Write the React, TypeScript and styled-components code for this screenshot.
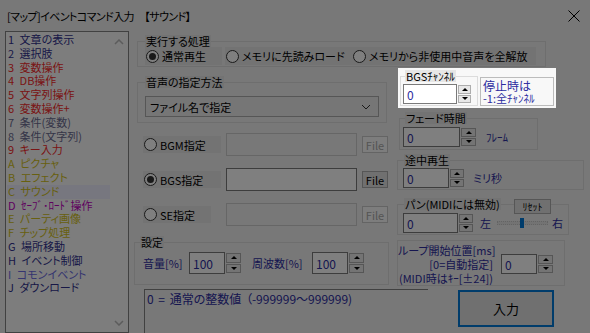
import React from "react";
import styled, { createGlobalStyle } from "styled-components";

const GlobalStyle = createGlobalStyle`
  html, body {
    margin: 0;
    padding: 0;
    background: #787878;
  }
  * {
    box-sizing: border-box;
  }
`;

const FONT = `"Noto Sans CJK JP", "Noto Sans", sans-serif`;
const NAVY = "#2c2ca0";

const BLUE = "#30308e";
const RED = "#f42a2a";
const GREY = "#6a6a90";
const OLIVE = "#d0c020";
const PURPLE = "#c000c0";
const LIGHT_BLUE = "#6a6ae0";

const COMMANDS: { label: string; color: string; selected?: boolean }[] = [
  { label: "1 文章の表示", color: BLUE },
  { label: "2 選択肢", color: BLUE },
  { label: "3 変数操作", color: RED },
  { label: "4 DB操作", color: RED },
  { label: "5 文字列操作", color: RED },
  { label: "6 変数操作+", color: RED },
  { label: "7 条件(変数)", color: GREY },
  { label: "8 条件(文字列)", color: GREY },
  { label: "9 キー入力", color: RED },
  { label: "A ピクチャ", color: OLIVE },
  { label: "B エフェクト", color: OLIVE },
  { label: "C サウンド", color: OLIVE, selected: true },
  { label: "D ｾｰﾌﾞ･ﾛｰﾄﾞ操作", color: PURPLE },
  { label: "E パーティ画像", color: OLIVE },
  { label: "F チップ処理", color: OLIVE },
  { label: "G 場所移動", color: BLUE },
  { label: "H イベント制御", color: BLUE },
  { label: "I コモンイベント", color: LIGHT_BLUE },
  { label: "J ダウンロード", color: BLUE },
];

const Window = styled.div`
  position: relative;
  width: 590px;
  height: 333px;
  overflow: hidden;
  background: #f0f0f0;
  font-family: ${FONT};
  font-size: 11px;
  font-feature-settings: "palt";
  color: #000;
`;

const TitleBar = styled.div`
  height: 31px;
  display: flex;
  align-items: center;
  justify-content: space-between;
  padding: 0 10px 0 7px;
`;

const TitleText = styled.div`
  font-size: 11px;
  line-height: 14px;
  letter-spacing: -0.6px;
  white-space: pre;
`;

const Body = styled.div`
  display: flex;
  gap: 8px;
  padding-left: 5px;
`;

/* command list */
const CommandList = styled.div`
  width: 124px;
  height: 302px;
  border: 1px solid #828282;
  background: #fbfbfb;
  display: flex;
`;

const Items = styled.div`
  width: 104px;
  padding: 1px 0 0 1px;
`;

const CommandItem = styled.div<{ $color: string; $selected?: boolean }>`
  height: 13.8px;
  line-height: 13.8px;
  padding-left: 1px;
  white-space: nowrap;
  word-spacing: 3px;
  color: ${(p) => p.$color};
  background: ${(p) => (p.$selected ? "#eeeeff" : "transparent")};
`;

const ScrollTrack = styled.div`
  flex: 1;
  display: flex;
  flex-direction: column;
  justify-content: space-between;
  align-items: center;
  padding: 7px 0 6px;
`;

/* generic win32 parts */
const Group = styled.fieldset`
  margin: 0;
  min-width: 0;
  border: 1px solid #dcdcdc;
  padding: 0;
`;

const Legend = styled.legend<{ $ml?: number }>`
  padding: 0 1px;
  margin-left: ${(p) => p.$ml ?? 0}px;
  height: 12px;
  line-height: 12px;
  background: #e6e6e6;
  white-space: nowrap;
`;

const RadioLabel = styled.div<{ $w: number; $h?: number; $ml?: number }>`
  display: flex;
  align-items: center;
  gap: 3px;
  width: ${(p) => p.$w}px;
  height: ${(p) => p.$h ?? 18}px;
  margin-left: ${(p) => p.$ml ?? 0}px;
  padding-left: 1px;
  background: #e6e6e6;
  white-space: nowrap;
`;

const RadioCircle = styled.span<{ $checked?: boolean }>`
  width: 13px;
  height: 13px;
  flex: none;
  border-radius: 50%;
  border: 1px solid #333;
  background: #fff;
  display: flex;
  align-items: center;
  justify-content: center;

  &::after {
    content: "";
    width: 7px;
    height: 7px;
    border-radius: 50%;
    background: ${(p) => (p.$checked ? "#333" : "transparent")};
  }
`;

const PushButton = styled.div<{ $w: number; $h: number; $disabled?: boolean }>`
  width: ${(p) => p.$w}px;
  height: ${(p) => p.$h}px;
  border: 1px solid ${(p) => (p.$disabled ? "#c8c8c8" : "#adadad")};
  background: ${(p) => (p.$disabled ? "#fafafa" : "#e1e1e1")};
  color: ${(p) => (p.$disabled ? "#a8a8a8" : "#000")};
  font-size: 11px;
  display: flex;
  align-items: center;
  justify-content: center;
  flex: none;
`;

/* spin control */
const SpinBox = styled.div<{ $h: number; $ml?: number }>`
  display: flex;
  height: ${(p) => p.$h}px;
  margin-left: ${(p) => p.$ml ?? 0}px;
  flex: none;
`;

const SpinField = styled.div<{ $w: number }>`
  width: ${(p) => p.$w}px;
  border: 1px solid #7a7a7a;
  background: #fff;
  color: ${NAVY};
  font-size: 12px;
  padding-left: 3px;
  display: flex;
  align-items: center;
`;

const SpinButtons = styled.div<{ $w: number }>`
  width: ${(p) => p.$w}px;
  display: flex;
  flex-direction: column;
  gap: 1px;
  padding: 1px 0 1px 1px;
`;

const SpinArrow = styled.div<{ $down?: boolean }>`
  flex: 1;
  border: 1px solid #adadad;
  background: #e8e8e8;
  display: flex;
  align-items: center;
  justify-content: center;

  &::after {
    content: "";
    border-left: 3px solid transparent;
    border-right: 3px solid transparent;
    ${(p) =>
      p.$down ? "border-top: 3px solid #000;" : "border-bottom: 3px solid #000;"}
  }
`;

function Spin({
  value,
  w,
  bw,
  h,
  ml,
}: {
  value: string;
  w: number;
  bw: number;
  h: number;
  ml?: number;
}) {
  return (
    <SpinBox $h={h} $ml={ml}>
      <SpinField $w={w}>{value}</SpinField>
      <SpinButtons $w={bw}>
        <SpinArrow />
        <SpinArrow $down />
      </SpinButtons>
    </SpinBox>
  );
}

const Unit = styled.span<{ $ml: number }>`
  margin-left: ${(p) => p.$ml}px;
  color: ${NAVY};
  white-space: nowrap;
`;

/* main area */
const Main = styled.div`
  width: 447px;
  display: flex;
  flex-direction: column;
`;

const ProcessGroup = styled(Group)`
  margin-top: 4px;
  width: 409px;
  padding: 0 7px 1px;
`;

const RadioRow = styled.div`
  display: flex;
`;

const Columns = styled.div`
  display: flex;
  gap: 8px;
`;

const LeftColumn = styled.div`
  width: 252px;
  display: flex;
  flex-direction: column;
`;

const SoundGroup = styled(Group)`
  margin-top: 9px;
  width: 250px;
  padding: 0 7px 5px;
`;

const Select = styled.div`
  margin-top: 8px;
  height: 21px;
  border: 1px solid #adadad;
  background: #ececec;
  display: flex;
  align-items: center;
  justify-content: space-between;
  padding: 0 7px 0 4px;
`;

const FileRow = styled.div<{ $mt: number }>`
  display: grid;
  grid-template-columns: 78px 131px 26px;
  align-items: center;
  gap: 5px;
  margin-top: ${(p) => p.$mt}px;
  padding-left: 6px;
`;

const PathInput = styled.div<{ $disabled?: boolean }>`
  height: 23px;
  border: 1px solid ${(p) => (p.$disabled ? "#cccccc" : "#7a7a7a")};
  background: ${(p) => (p.$disabled ? "#f0f0f0" : "#fff")};
`;

const SettingsGroup = styled(Group)`
  margin: 10px 0 0 -3px;
  width: 255px;
  padding: 0 8px 10px;
`;

const SettingsRow = styled.div`
  display: flex;
  align-items: center;
  margin-top: 4px;
`;

const SettingLabel = styled.span<{ $w: number; $ml?: number }>`
  width: ${(p) => p.$w}px;
  margin-left: ${(p) => p.$ml ?? 0}px;
  color: ${NAVY};
  white-space: nowrap;
`;

const RightColumn = styled.div`
  width: 187px;
  display: flex;
  flex-direction: column;
`;

const Highlight = styled.div`
  position: relative;
  z-index: 2;
  margin: 1px 0 0 1px;
  width: 158px;
  height: 40px;
  padding: 2px;
  display: flex;
  align-items: flex-start;
  background: #f8f8f8;
`;

const ChannelGroup = styled(Group)`
  width: 78px;
  padding: 0 2px 1px;
`;

const NoteBox = styled.div`
  margin: 7px 0 0 2px;
  width: 74px;
  height: 29px;
  border: 1px solid #bcbcbc;
  padding: 1px 0 0 2px;
  color: ${NAVY};
  font-size: 12px;
  line-height: 13px;
  white-space: nowrap;
  overflow: hidden;
`;

const SmallLine = styled.div`
  font-size: 11px;
`;

const SpinRow = styled.div<{ $mt: number }>`
  display: flex;
  align-items: center;
  margin-top: ${(p) => p.$mt}px;
`;

const FadeGroup = styled(Group)`
  margin: 4px 0 0 2px;
  width: 139px;
  padding: 0 3px 2px;
`;

const MidwayGroup = styled(Group)`
  margin-top: 4px;
  width: 187px;
  padding: 0 5px 1px;
`;

const PanWrap = styled.div`
  position: relative;
  margin-top: 8px;
`;

const PanGroup = styled(Group)`
  width: 172px;
  padding: 0 5px 1px;
`;

const ResetButton = styled(PushButton)`
  position: absolute;
  top: 1px;
  left: 117px;
  font-size: 10px;
`;

const Slider = styled.div`
  position: relative;
  width: 51px;
  height: 12px;
  margin-left: 6px;
  display: flex;
  align-items: center;
`;

const SliderTrack = styled.div`
  width: 100%;
  height: 4px;
  border: 1px dotted #c8c8c8;
  background: #e7e7e7;
`;

const SliderThumb = styled.div`
  position: absolute;
  left: 23px;
  top: 1px;
  width: 4px;
  height: 10px;
  background: #0078d7;
`;

const LoopGroup = styled(Group)`
  margin-top: 5px;
  width: 168px;
  padding: 2px 0 0;
  display: flex;
  align-items: center;
`;

const LoopLabels = styled.div`
  width: 95px;
  text-align: right;
  line-height: 14px;
  color: ${NAVY};
  white-space: nowrap;
`;

const BottomRow = styled.div`
  display: flex;
  align-items: flex-start;
  margin-top: 3px;
`;

const InfoBox = styled.div`
  margin-left: 7px;
  width: 284px;
  height: 50px;
  border-top: 1px solid #828282;
  border-left: 1px solid #828282;
  padding: 2px 2px;
  font-size: 12px;
  line-height: 14px;
  word-spacing: 2px;
  color: ${NAVY};
  white-space: nowrap;
`;

const EnterButton = styled.div`
  margin: 1px 0 0 30px;
  width: 96px;
  height: 37px;
  border: 2px solid #0078d7;
  background: #e1e1e1;
  font-size: 13px;
  display: flex;
  align-items: center;
  justify-content: center;
`;

const Dim = styled.div`
  position: absolute;
  inset: 0;
  z-index: 1;
  background: rgba(0, 0, 0, 0.5);
  pointer-events: none;
`;

const Chevron = ({ up }: { up?: boolean }) => (
  <svg width="10" height="6" viewBox="0 0 10 6">
    <path
      d={up ? "M1 5L5 1L9 5" : "M1 1L5 5L9 1"}
      fill="none"
      stroke="#b8b8b8"
      strokeWidth="1.5"
    />
  </svg>
);

export default function App() {
  return (
    <Window>
      <GlobalStyle />
      <TitleBar>
        <TitleText>[マップ]イベントコマンド入力　【サウンド】</TitleText>
        <svg width="12" height="12" viewBox="0 0 12 12">
          <path d="M0.5 0.5L11.5 11.5M11.5 0.5L0.5 11.5" stroke="#000" strokeWidth="1" />
        </svg>
      </TitleBar>

      <Body>
        <CommandList>
          <Items>
            {COMMANDS.map((c) => (
              <CommandItem key={c.label} $color={c.color} $selected={c.selected}>
                {c.label}
              </CommandItem>
            ))}
          </Items>
          <ScrollTrack>
            <Chevron up />
            <Chevron />
          </ScrollTrack>
        </CommandList>

        <Main>
          <ProcessGroup>
            <Legend>実行する処理</Legend>
            <RadioRow>
              <RadioLabel $w={77}>
                <RadioCircle $checked />
                通常再生
              </RadioLabel>
              <RadioLabel $w={127} $ml={3}>
                <RadioCircle />
                メモリに先読みロード
              </RadioLabel>
              <RadioLabel $w={184}>
                <RadioCircle />
                メモリから非使用中音声を全解放
              </RadioLabel>
            </RadioRow>
          </ProcessGroup>

          <Columns>
            <LeftColumn>
              <SoundGroup>
                <Legend>音声の指定方法</Legend>
                <Select>
                  ファイル名で指定
                  <svg width="10" height="6" viewBox="0 0 10 6">
                    <path d="M1 1L5 5L9 1" fill="none" stroke="#333" strokeWidth="1" />
                  </svg>
                </Select>
              </SoundGroup>

              <FileRow $mt={10}>
                <RadioLabel $w={78} $h={17}>
                  <RadioCircle />
                  BGM指定
                </RadioLabel>
                <PathInput $disabled />
                <PushButton $w={26} $h={17} $disabled>
                  File
                </PushButton>
              </FileRow>
              <FileRow $mt={12}>
                <RadioLabel $w={78} $h={17}>
                  <RadioCircle $checked />
                  BGS指定
                </RadioLabel>
                <PathInput />
                <PushButton $w={26} $h={17}>
                  File
                </PushButton>
              </FileRow>
              <FileRow $mt={12}>
                <RadioLabel $w={68} $h={17}>
                  <RadioCircle />
                  SE指定
                </RadioLabel>
                <PathInput $disabled />
                <PushButton $w={26} $h={17} $disabled>
                  File
                </PushButton>
              </FileRow>

              <SettingsGroup>
                <Legend $ml={-3}>設定</Legend>
                <SettingsRow>
                  <SettingLabel $w={46}>音量[%]</SettingLabel>
                  <Spin value="100" w={36} bw={16} h={22} />
                  <SettingLabel $w={60} $ml={11}>
                    周波数[%]
                  </SettingLabel>
                  <Spin value="100" w={36} bw={16} h={22} />
                </SettingsRow>
              </SettingsGroup>
            </LeftColumn>

            <RightColumn>
              <Highlight>
                <ChannelGroup>
                  <Legend $ml={2}>BGSﾁｬﾝﾈﾙ</Legend>
                  <SpinRow $mt={2}>
                    <Spin value="0" w={54} bw={14} h={20} />
                  </SpinRow>
                </ChannelGroup>
                <NoteBox>
                  <div>停止時は</div>
                  <SmallLine>-1:全ﾁｬﾝﾈﾙ</SmallLine>
                </NoteBox>
              </Highlight>

              <FadeGroup>
                <Legend $ml={2}>フェード時間</Legend>
                <SpinRow $mt={3}>
                  <Spin value="0" w={57} bw={16} h={20} />
                  <Unit $ml={10}>ﾌﾚｰﾑ</Unit>
                </SpinRow>
              </FadeGroup>

              <MidwayGroup>
                <Legend $ml={1}>途中再生</Legend>
                <SpinRow $mt={2}>
                  <Spin value="0" w={46} bw={15} h={20} />
                  <Unit $ml={9}>ミリ秒</Unit>
                </SpinRow>
              </MidwayGroup>

              <PanWrap>
                <PanGroup>
                  <Legend $ml={1}>パン(MIDIには無効)</Legend>
                  <SpinRow $mt={3}>
                    <Spin value="0" w={55} bw={15} h={20} />
                    <Unit $ml={7}>左</Unit>
                    <Slider>
                      <SliderTrack />
                      <SliderThumb />
                    </Slider>
                    <Unit $ml={4}>右</Unit>
                  </SpinRow>
                </PanGroup>
                <ResetButton $w={37} $h={15}>
                  ﾘｾｯﾄ
                </ResetButton>
              </PanWrap>

              <LoopGroup>
                <LoopLabels>
                  <div>ループ開始位置[ms]</div>
                  <div>[0=自動指定]</div>
                  <div>(MIDI時はｷｰ[±24])</div>
                </LoopLabels>
                <Spin value="0" w={36} bw={16} h={20} ml={8} />
              </LoopGroup>
            </RightColumn>
          </Columns>

          <BottomRow>
            <InfoBox>0 = 通常の整数値 （-999999～999999)</InfoBox>
            <EnterButton>入力</EnterButton>
          </BottomRow>
        </Main>
      </Body>
      <Dim />
    </Window>
  );
}
